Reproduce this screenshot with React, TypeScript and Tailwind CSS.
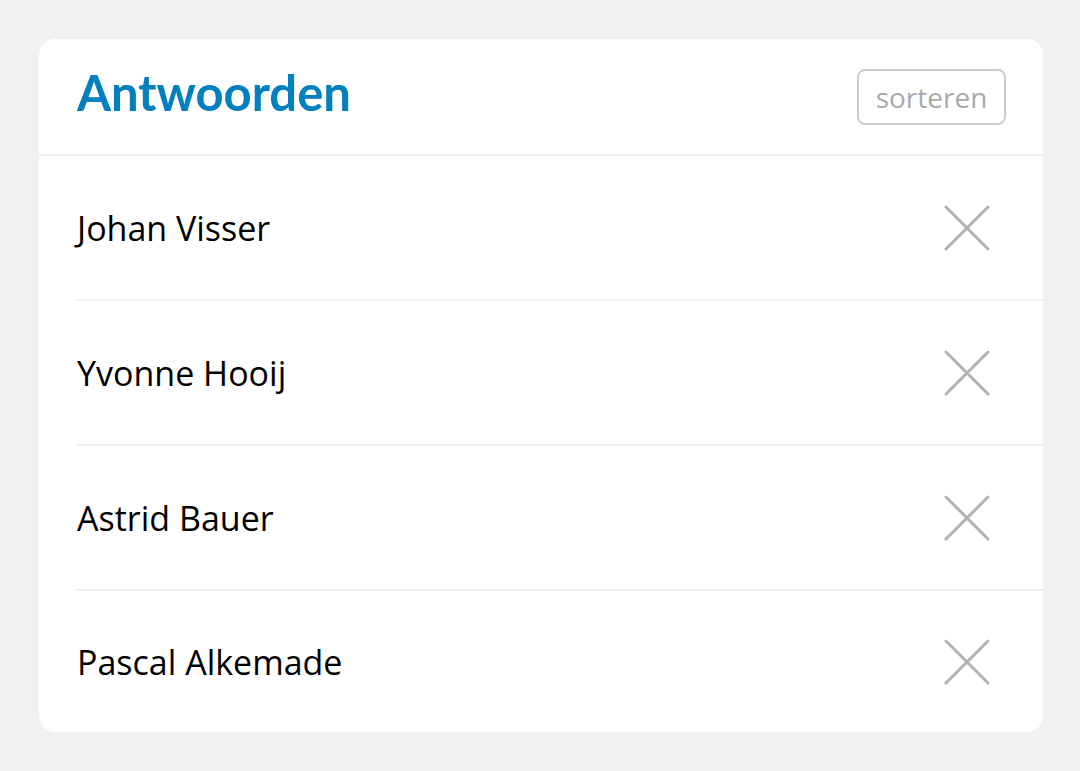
const NAMES = ['Johan Visser', 'Yvonne Hooij', 'Astrid Bauer', 'Pascal Alkemade'];

function CloseIcon() {
  return (
    <svg width="46" height="46" viewBox="0 0 46 46" className="block">
      <path
        d="M2 2 L44 44 M44 2 L2 44"
        stroke="#b2b2b2"
        strokeWidth="3"
        strokeLinecap="round"
        fill="none"
      />
    </svg>
  );
}

export default function App() {
  return (
    <div className="min-h-[771px] bg-[#f1f1f1] pt-[39px] pl-[39px] pr-[37px] font-['Open_Sans',sans-serif]">
      <div className="bg-white rounded-[16px] w-[1004px] overflow-hidden">
        {/* Header */}
        <div className="flex items-center justify-between h-[117px] pl-[38px] pr-[37px] border-b-[2px] border-[#efefef]">
          <h1 className="font-['Lato',sans-serif] text-[49px] font-bold text-[#0080bf] leading-none mb-[9px]">
            Antwoorden
          </h1>
          <button className="h-[56px] w-[149px] border-[2px] border-[#cccccc] rounded-[8px] text-[28px] text-[#aaaaaa] leading-none flex items-center justify-center">
            sorteren
          </button>
        </div>

        {/* Rows */}
        <ul>
          {NAMES.map((name, i) => {
            const last = i === NAMES.length - 1;
            return (
              <li key={name} className="pl-[38px]">
                <div
                  className={`flex items-center justify-between pr-[53px] ${
                    last ? 'h-[141px]' : 'h-[145px] border-b-[2px] border-[#efefef]'
                  }`}
                >
                  <span className="text-[34px] text-black leading-none">{name}</span>
                  <CloseIcon />
                </div>
              </li>
            );
          })}
        </ul>
      </div>
    </div>
  );
}
